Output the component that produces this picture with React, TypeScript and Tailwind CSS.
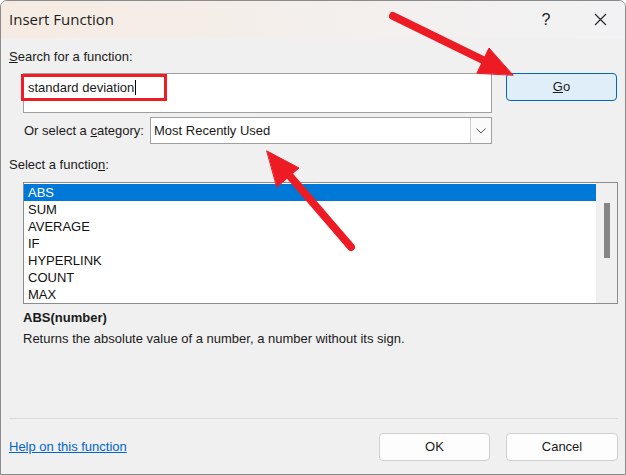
const functions = ["ABS", "SUM", "AVERAGE", "IF", "HYPERLINK", "COUNT", "MAX"];

function Arrows() {
  return (
    <svg
      className="pointer-events-none absolute inset-0"
      width={626}
      height={475}
      viewBox="0 0 626 475"
    >
      <g fill="#ed1c24" stroke="#ed1c24" strokeLinecap="round">
        <line x1={392} y1={15} x2={486} y2={61} strokeWidth={8} />
        <polygon points="512,74 488,47 476,72" strokeWidth={1} strokeLinejoin="round" />
        <line x1={350} y1={246} x2={288} y2={174} strokeWidth={8} />
        <polygon points="266,150 298,167 276,186" strokeWidth={1} strokeLinejoin="round" />
      </g>
    </svg>
  );
}

export default function App() {
  return (
    <div
      className="relative flex h-[475px] w-[626px] flex-col overflow-hidden rounded-t-[7px] border border-[#8a8a8a] bg-[#f0f0f0] text-[#1a1a1a]"
      style={{ fontFamily: '"Liberation Sans", Arial, sans-serif' }}
    >
      {/* title bar */}
      <div className="flex h-[37px] shrink-0 items-center bg-gradient-to-r from-[#f6ebe2] via-[#f3efec] to-[#f2f2f4] pl-[8px]">
        <span className="text-[15px] text-[#1c1c1c]" style={{ fontFamily: '"Open Sans", sans-serif' }}>
          Insert Function
        </span>
        <span className="ml-auto w-[20px] text-center text-[16px] text-[#222]">?</span>
        <span className="ml-[37px] mr-[18px] flex h-[14px] w-[14px] items-center justify-center">
          <svg width="13" height="13" viewBox="0 0 13 13">
            <path d="M1 1 L12 12 M12 1 L1 12" stroke="#222" strokeWidth="1.1" />
          </svg>
        </span>
      </div>

      {/* body */}
      <div className="flex flex-1 flex-col pl-[8px] pr-[7px] text-[13px]">
        <div className="mt-[10px] h-[17px] leading-[17px]">
          <u>S</u>earch for a function:
        </div>

        <div className="mt-[8px] flex items-start">
          <div className="relative ml-[14px] h-[40px] w-[469px] border border-[#a0a0a0] bg-white">
            <div className="absolute left-[-3px] top-[0px] flex h-[27px] w-[146px] items-center border-[3px] border-[#ee1c25] pl-[4px] text-[13px]">
              standard deviation
              <span className="ml-[1px] inline-block h-[15px] w-[1px] bg-black" />
            </div>
          </div>
          <button className="ml-[14px] flex h-[28px] w-[111px] items-center justify-center rounded-[4px] border border-[#0067c0] bg-[#e0eef9] text-[13px]">
            <u>G</u>o
          </button>
        </div>

        <div className="mt-[4px] flex items-center">
          <span className="ml-[15px] w-[126px]">
            Or select a <u>c</u>ategory:
          </span>
          <div className="flex h-[27px] w-[342px] items-stretch border border-[#a0a0a0] bg-white">
            <span className="flex flex-1 items-center pl-[3px]">Most Recently Used</span>
            <span className="flex w-[21px] items-center justify-center border-l border-[#d0d0d0] bg-[#fbfbfb]">
              <svg width="10" height="6" viewBox="0 0 10 6">
                <path d="M0.5 0.5 L5 5 L9.5 0.5" fill="none" stroke="#555" strokeWidth="1" />
              </svg>
            </span>
          </div>
        </div>

        <div className="mt-[12px] h-[17px] leading-[17px]">
          Select a functio<u>n</u>:
        </div>

        <div className="ml-[14px] mt-[9px] flex h-[122px] border border-[#8c8c8c] bg-white">
          <div className="flex-1 pt-[1px]">
            {functions.map((f, i) => (
              <div
                key={f}
                className={`h-[17px] pl-[4px] text-[13px] leading-[17px] ${
                  i === 0 ? "bg-[#0078d7] text-white" : "text-[#111]"
                }`}
              >
                {f}
              </div>
            ))}
          </div>
          <div className="w-[21px] bg-[#f0f0f0] pl-[8px] pt-[20px]">
            <div className="h-[55px] w-[6px] bg-[#858585]" />
          </div>
        </div>

        <div className="ml-[14px] mt-[5px] h-[17px] font-bold leading-[17px]">ABS(number)</div>
        <div className="ml-[14px] mt-[4px] h-[17px] leading-[17px]">
          Returns the absolute value of a number, a number without its sign.
        </div>

        <div className="flex-1" />
        <div className="h-px bg-[#d9d9d9]" />

        <div className="flex h-[55px] items-center">
          <a className="cursor-pointer text-[13px] text-[#0066cc] underline">Help on this function</a>
          <button className="ml-auto h-[28px] w-[111px] rounded-[4px] border border-[#d0d0d0] bg-[#fdfdfd] text-[13px]">
            OK
          </button>
          <button className="ml-[16px] h-[28px] w-[112px] rounded-[4px] border border-[#d0d0d0] bg-[#fdfdfd] text-[13px]">
            Cancel
          </button>
        </div>
      </div>

      <Arrows />
    </div>
  );
}
